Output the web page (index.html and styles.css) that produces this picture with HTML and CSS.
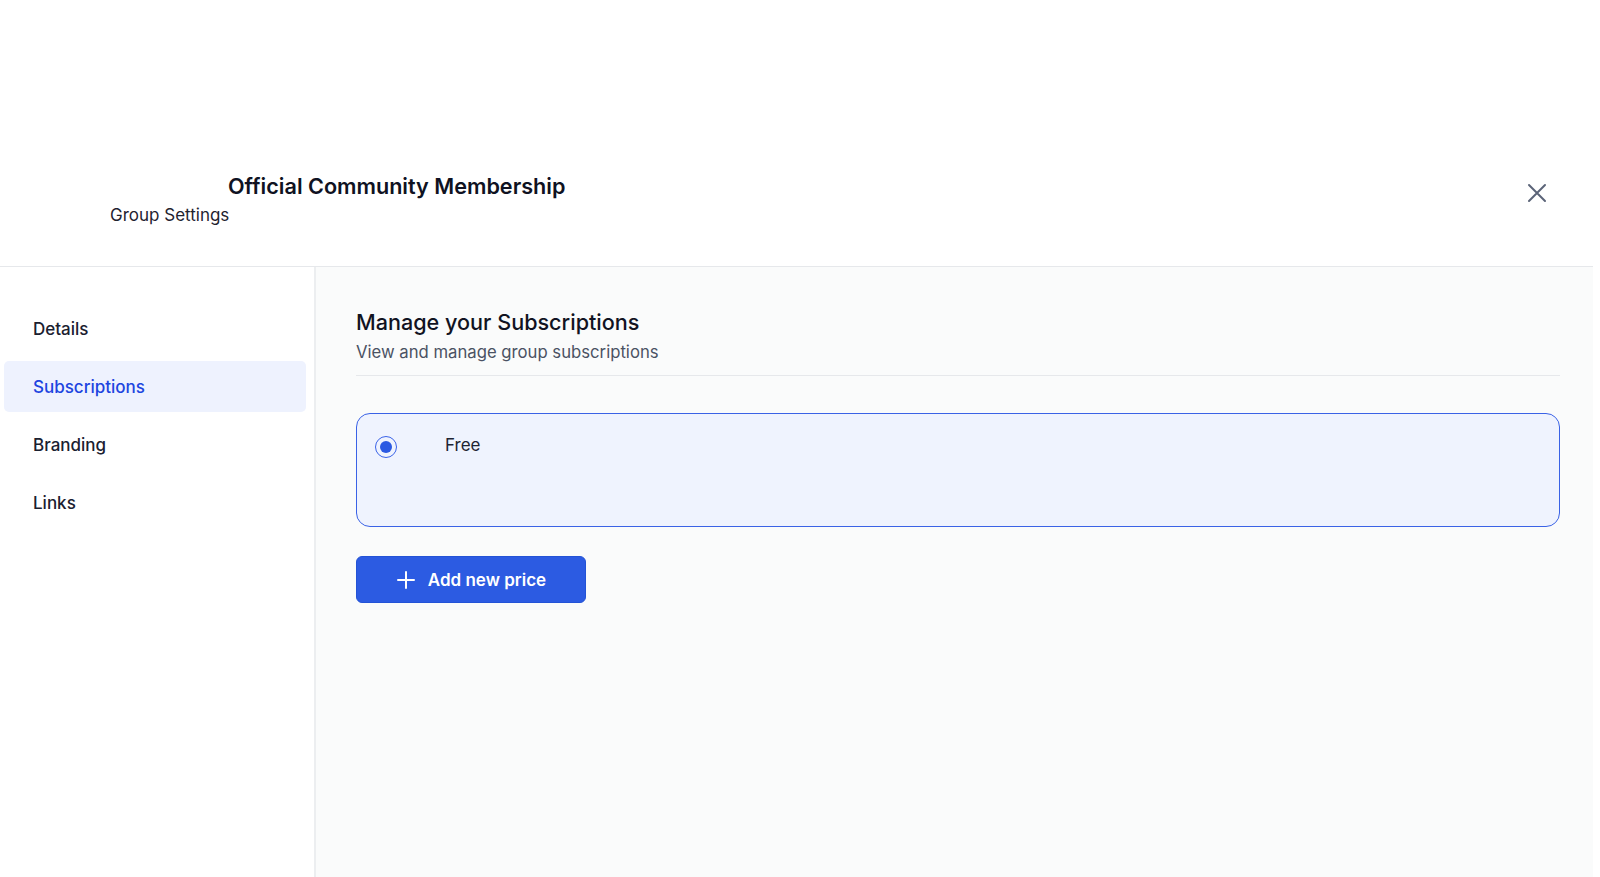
FILE: index.html
```html
<!DOCTYPE html>
<html lang="en">
<head>
    <meta charset="UTF-8">
    <meta name="viewport" content="width=device-width, initial-scale=1.0">
    <title>Group Settings</title>
    <link rel="stylesheet" href="styles.css">
</head>
<body>

    <div class="page">
        <!-- Header -->
        <header class="header">
            <div class="header-text">
                <h1 class="group-title">Official Community Membership</h1>
                <p class="group-sub">Group Settings</p>
            </div>
            <button class="close-btn" aria-label="Close">
                <svg viewBox="0 0 20 20" width="20" height="20">
                    <path d="M2 2 L18 18 M18 2 L2 18" stroke="#5b6478" stroke-width="2" stroke-linecap="round" fill="none"/>
                </svg>
            </button>
        </header>

        <div class="layout">
            <!-- Sidebar -->
            <nav class="sidebar">
                <a class="nav-item">Details</a>
                <a class="nav-item active">Subscriptions</a>
                <a class="nav-item">Branding</a>
                <a class="nav-item">Links</a>
            </nav>

            <!-- Main -->
            <main class="main">
                <div class="section-head">
                    <h2 class="section-title">Manage your Subscriptions</h2>
                    <p class="section-sub">View and manage group subscriptions</p>
                </div>

                <div class="price-card">
                    <span class="radio"><span class="radio-dot"></span></span>
                    <span class="price-name">Free</span>
                </div>

                <button class="add-btn">
                    <svg viewBox="0 0 20 20" width="20" height="20">
                        <path d="M10 2 V18 M2 10 H18" stroke="#ffffff" stroke-width="2" stroke-linecap="round" fill="none"/>
                    </svg>
                    Add new price
                </button>
            </main>
        </div>
    </div>

</body>
</html>
```

FILE: styles.css
```css
/* Base */
* { box-sizing: border-box; }

body {
    margin: 0;
    background-color: #ffffff;
    font-family: Inter, "Noto Sans", sans-serif;
    color: #111827;
}

.page {
    width: calc(100% - 7px);
    height: 877px;
    display: flex;
    flex-direction: column;
}

/* Header */
.header {
    height: 267px;
    flex-shrink: 0;
    display: flex;
    align-items: flex-start;
    justify-content: space-between;
    padding: 173px 46px 0 110px;
    border-bottom: 1px solid #e6e8eb;
}

.group-title {
    margin: 0 0 0 118px;
    font-size: 21.6px;
    line-height: 26px;
    font-weight: 600;
    color: #0f1222;
}

.group-sub {
    margin: 5px 0 0;
    font-size: 17px;
    line-height: 22px;
    color: #1f2330;
}

.close-btn {
    margin-top: 10px;
    padding: 0;
    border: none;
    background: transparent;
    width: 20px;
    height: 20px;
    cursor: pointer;
}

/* Layout */
.layout {
    flex: 1;
    display: flex;
}

/* Sidebar */
.sidebar {
    width: 316px;
    flex-shrink: 0;
    padding: 36px 8px 0 4px;
    border-right: 2px solid #eceef0;
    display: flex;
    flex-direction: column;
    gap: 7px;
}

.nav-item {
    height: 51px;
    display: flex;
    align-items: center;
    padding-left: 29px;
    border-radius: 5px;
    font-size: 17px;
    font-weight: 450;
    color: #1a2030;
    cursor: pointer;
}

.nav-item.active {
    background-color: #eef2fe;
    color: #1d45e0;
}

/* Main */
.main {
    flex: 1;
    background-color: #fafbfb;
    padding: 41px 33px 0 40px;
}

.section-head {
    padding-bottom: 11px;
    border-bottom: 1px solid #e6e8eb;
}

.section-title {
    margin: 0;
    font-size: 21.6px;
    line-height: 28px;
    font-weight: 500;
    color: #111322;
}

.section-sub {
    margin: 4px 0 0;
    font-size: 16.7px;
    line-height: 24px;
    color: #4a5263;
}

.price-card {
    margin-top: 37px;
    height: 114px;
    border: 1.5px solid #3a62e6;
    border-radius: 14px;
    background-color: #eff3fe;
    display: flex;
    align-items: flex-start;
    padding: 22px 18px;
}

.radio {
    width: 22px;
    height: 22px;
    border: 1.5px solid #3b63e8;
    border-radius: 50%;
    display: flex;
    align-items: center;
    justify-content: center;
}

.radio-dot {
    width: 12px;
    height: 12px;
    border-radius: 50%;
    background-color: #2b59e2;
}

.price-name {
    margin-left: 48px;
    font-size: 17px;
    line-height: 18px;
    color: #1e2433;
}

.add-btn {
    margin-top: 29px;
    width: 230px;
    height: 47px;
    border: 1px solid #2353d6;
    border-radius: 6px;
    background-color: #2c5be2;
    color: #ffffff;
    font-family: Inter, "Noto Sans", sans-serif;
    font-size: 17px;
    font-weight: 600;
    display: flex;
    align-items: center;
    justify-content: center;
    gap: 12px;
    cursor: pointer;
}
```
